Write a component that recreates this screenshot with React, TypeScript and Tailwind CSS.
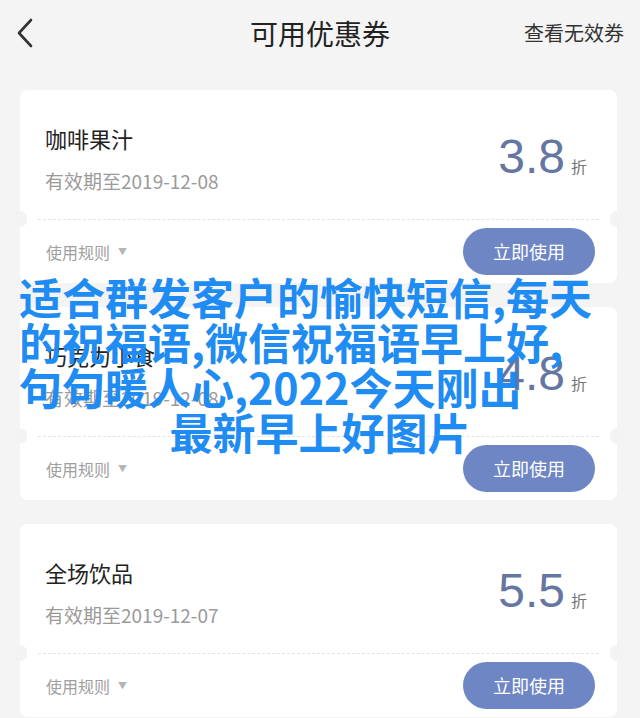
import React from 'react';

interface Coupon {
  name: string;
  expire: string;
  discount: string;
}

const coupons: Coupon[] = [
  { name: '咖啡果汁', expire: '有效期至2019-12-08', discount: '3.8' },
  { name: '巧克力小食', expire: '有效期至2019-12-08', discount: '4.8' },
  { name: '全场饮品', expire: '有效期至2019-12-07', discount: '5.5' },
];

const cjk = { fontFamily: '"Noto Sans CJK SC", "Noto Sans", sans-serif' };
const num = { fontFamily: '"Liberation Sans", Arial, sans-serif' };

const CouponCard: React.FC<{ coupon: Coupon }> = ({ coupon }) => {
  return (
    <div className="relative w-[597px] rounded-lg bg-white">
      <div className="flex h-[129px] justify-between pl-[25px] pr-[30px]">
        <div className="pt-[36px]">
          <p className="text-[22px] leading-[24px] text-[#222]">{coupon.name}</p>
          <p className="mt-[19px] text-[19px] leading-[24px] text-[#9a9a9a]">{coupon.expire}</p>
        </div>
        <div className="flex items-baseline pt-[44px]">
          <span style={num} className="text-[48px] leading-[46px] text-[#6676a3]">
            {coupon.discount}
          </span>
          <span className="ml-[6px] text-[16px] text-[#777]">折</span>
        </div>
      </div>

      <div className="mx-[18px] border-t border-dashed border-[#e3e3e3]" />
      <div className="absolute left-[-7px] top-[121px] h-4 w-[14px] rounded-full bg-[#f3f3f3]" />
      <div className="absolute right-[-7px] top-[121px] h-4 w-[14px] rounded-full bg-[#f3f3f3]" />

      <div className="flex h-[63px] items-center justify-between pl-[26px] pr-[22px]">
        <div className="flex items-center text-[16px] text-[#a0a0a0]">
          使用规则
          <span className="ml-[8px] text-[9px] text-[#b5b5b5]">▼</span>
        </div>
        <button className="h-[47px] w-[132px] rounded-full bg-[#6e86c3] text-[18px] text-white">
          立即使用
        </button>
      </div>
    </div>
  );
};

export default function App() {
  return (
    <div style={cjk} className="relative h-[718px] w-[640px] overflow-hidden bg-[#f4f4f4]">
      <header className="grid h-[66px] grid-cols-[1fr_auto_1fr] items-center pl-[16px] pr-[16px]">
        <svg width="18" height="30" viewBox="0 0 18 30" fill="none">
          <path d="M15 2 L3 15 L15 28" stroke="#333" strokeWidth="2.6" strokeLinecap="round" strokeLinejoin="round" />
        </svg>
        <h1 className="text-[28px] leading-[34px] text-[#222]">可用优惠券</h1>
        <span className="justify-self-end text-[20px] text-[#333]">查看无效券</span>
      </header>

      <div className="flex flex-col gap-[24px] pl-[20px] pt-[24px]">
        {coupons.map((c) => (
          <CouponCard key={c.discount} coupon={c} />
        ))}
      </div>

      <div className="absolute left-0 top-[274px] w-full text-[43px] font-bold leading-[45px] text-[#1e8cf2]">
        <p className="pl-[19px]">适合群发客户的愉快短信,每天</p>
        <p className="pl-[19px]">的祝福语,微信祝福语早上好,</p>
        <p className="pl-[19px]">句句暖人心,2022今天刚出</p>
        <p className="text-center">最新早上好图片</p>
      </div>
    </div>
  );
}
